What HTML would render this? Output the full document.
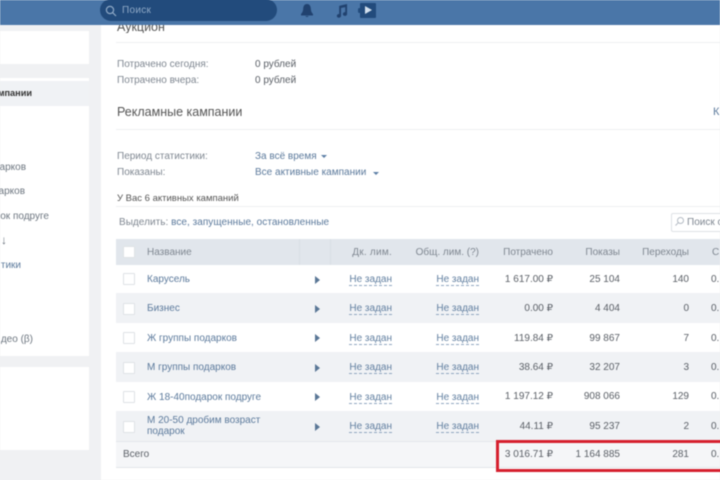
<!DOCTYPE html>
<html lang="ru"><head><meta charset="utf-8"><title>Рекламные кампании</title>
<style>
html,body{margin:0;padding:0;width:720px;height:480px;overflow:hidden;background:#f0f1f3}
body{font-family:"Liberation Sans","DejaVu Sans",sans-serif;font-size:10px;color:#5a5f66;position:relative}
#w{position:absolute;inset:0;filter:blur(.5px)}
.a{position:absolute;white-space:nowrap;line-height:12px}
.b{position:absolute}
.l{color:#5c7a9c}.g{color:#7f8791}.r{text-align:right}
.d{color:#617f a0;color:#617fa0;border-bottom:1px dashed #8fa6c0;line-height:11px}
.c{position:absolute;left:123px;width:10px;height:10px;border:1px solid #dfe2e6;background:#fff;border-radius:1px}
.t{position:absolute;left:315px;width:0;height:0;border-left:5px solid #5a7796;border-top:4px solid transparent;border-bottom:4px solid transparent}
</style></head><body><div id="w">
<div class="b" style="left:0;top:0;width:720px;height:25px;background:#4a76a8"></div>
<div class="b" style="left:100px;top:-1px;width:177px;height:22px;background:#224b7c;border-radius:11px"></div>
<svg class="b" style="left:104px;top:4px" width="14" height="14" viewBox="0 0 14 14" fill="none" stroke="#8fa9c6" stroke-width="1.2"><circle cx="6" cy="6" r="3.6"/><path d="M8.7 8.7L12 12"/></svg>
<div class="a" style="left:122px;top:5px;color:#8fa9c6;font-size:10px;letter-spacing:.3px">Поиск</div>
<svg class="b" style="left:300px;top:3px" width="14" height="15" viewBox="0 0 14 15" fill="#21426f"><path d="M7 1C4.4 1 3.4 3 3.2 5.5 3 8.4 2.4 9.5 1 11V12.5H13V11C11.6 9.5 11 8.4 10.8 5.5 10.6 3 9.6 1 7 1ZM5.3 13A1.9 1.9 0 0 0 8.7 13Z"/></svg>
<svg class="b" style="left:335px;top:3px" width="13" height="15" viewBox="0 0 14 16" fill="#21426f"><path d="M4.5 3L13 1V11.5A2.3 2 0 1 1 11 9.8V4.3L6.5 5.3V13.5A2.3 2 0 1 1 4.5 11.8Z"/></svg>
<div class="b" style="left:360px;top:3px;width:16px;height:15px;background:#224b7c;border-radius:1px"></div>
<div class="b" style="left:358px;top:8px;width:3px;height:5px;background:#224b7c;border-radius:2px"></div>
<div class="b" style="left:365px;top:6px;width:0;height:0;border-left:7px solid #d3e0ee;border-top:4.5px solid transparent;border-bottom:4.5px solid transparent"></div>

<div class="b" style="left:0;top:31px;width:89px;height:33px;background:#fff"></div>
<div class="b" style="left:0;top:78px;width:89px;height:278px;background:#fff"></div>
<div class="b" style="left:0;top:81px;width:89px;height:25px;background:#f0f2f5"></div>
<div class="b" style="left:0;top:367px;width:89px;height:83px;background:#fff"></div>
<div class="a" style="right:688px;top:87px;color:#333;font-weight:bold;font-size:9.2px">мпании</div>
<div class="a" style="right:694px;top:162px;color:#6d7680">арков</div>
<div class="a" style="right:695px;top:186px;color:#6d7680">арков</div>
<div class="a" style="right:671px;top:211px;color:#6d7680">ок подруге</div>
<div class="a" style="left:1px;top:234px;color:#6d7680;font-size:12px">↓</div>
<div class="a l" style="right:699px;top:260px">тики</div>
<div class="a" style="right:687px;top:334px;color:#6d7680">део (β)</div>

<div class="b" style="left:101px;top:25px;width:619px;height:455px;background:#fff"></div>
<div class="a" style="left:117px;top:21px;font-size:12.5px;color:#555;clip-path:inset(4px 0 0 0)">Аукцион</div>
<div class="b" style="left:116px;top:42px;width:604px;height:1px;background:#eef0f2"></div>
<div class="a g" style="left:117px;top:59px">Потрачено сегодня:</div><div class="a" style="left:255px;top:59px">0 рублей</div>
<div class="a g" style="left:117px;top:75px">Потрачено вчера:</div><div class="a" style="left:255px;top:75px">0 рублей</div>
<div class="a" style="left:117px;top:105px;font-size:12.5px;line-height:15px;color:#555">Рекламные кампании</div>
<div class="a l" style="left:713px;top:106px;font-size:11px">К</div>
<div class="b" style="left:116px;top:129px;width:604px;height:1px;background:#eef0f2"></div>
<div class="a g" style="left:117px;top:151px">Период статистики:</div><div class="a l" style="left:255px;top:151px">За всё время</div>
<div class="b" style="left:321px;top:155px;border-top:3px solid #5d7fa6;border-left:3px solid transparent;border-right:3px solid transparent"></div>
<div class="a g" style="left:117px;top:167px">Показаны:</div><div class="a l" style="left:255px;top:167px">Все активные кампании</div>
<div class="b" style="left:373px;top:172px;border-top:3px solid #5d7fa6;border-left:3px solid transparent;border-right:3px solid transparent"></div>
<div class="a" style="left:117px;top:193px;font-size:9.5px;color:#555">У Вас 6 активных кампаний</div>
<div class="b" style="left:116px;top:206px;width:604px;height:1px;background:#eef0f2"></div>
<div class="a g" style="left:119px;top:217px;letter-spacing:.04px">Выделить: <span class="l">все, запущенные, остановленные</span></div>
<div class="b" style="left:671px;top:213px;width:60px;height:17px;border:1px solid #dfe2e6;border-radius:2px;background:#fff"></div>
<svg class="b" style="left:674px;top:216px" width="11" height="11" viewBox="0 0 11 11" fill="none" stroke="#b4bbc4"><circle cx="6.5" cy="4.5" r="3"/><path d="M4.3 6.7L1.5 9.5"/></svg>
<div class="a g" style="left:687px;top:217px">Поиск о</div>

<div class="b" style="left:116px;top:239px;width:604px;height:26px;background:#e1e6ec"></div>
<div class="b" style="left:116px;top:293px;width:604px;height:30px;background:#f0f2f5"></div>
<div class="b" style="left:116px;top:352px;width:604px;height:30px;background:#f0f2f5"></div>
<div class="b" style="left:116px;top:411px;width:604px;height:30px;background:#f0f2f5"></div>
<div class="b" style="left:116px;top:441px;width:604px;height:27px;background:#f5f6f8;border-top:1px solid #e3e6ea;border-bottom:1px solid #e3e6ea;box-sizing:border-box"></div>
<div class="b" style="left:299px;top:239px;width:1px;height:26px;background:#d9dfe6"></div>
<div class="b" style="left:330px;top:239px;width:1px;height:26px;background:#d9dfe6"></div>

<div class="c" style="top:246px"></div><div class="c" style="top:273px"></div><div class="c" style="top:303px"></div><div class="c" style="top:332px"></div><div class="c" style="top:362px"></div><div class="c" style="top:391px"></div><div class="c" style="top:421px"></div>

<div class="a g" style="left:147px;top:247px">Название</div>
<div class="a g r" style="right:328px;top:247px;letter-spacing:.25px">Дк. лим.</div>
<div class="a g r" style="right:241px;top:247px">Общ. лим. (?)</div>
<div class="a g r" style="right:167px;top:247px">Потрачено</div>
<div class="a g r" style="right:100px;top:247px">Показы</div>
<div class="a g r" style="right:31px;top:247px">Переходы</div>
<div class="a g" style="left:712px;top:247px">С</div>

<div class="a l" style="left:147px;top:274px">Карусель</div>
<div class="a l" style="left:147px;top:303px">Бизнес</div>
<div class="a l" style="left:147px;top:333px">Ж группы подарков</div>
<div class="a l" style="left:147px;top:362px">М группы подарков</div>
<div class="a l" style="left:147px;top:392px">Ж 18-40подарок подруге</div>
<div class="a l" style="left:147px;top:415px;line-height:11px">М 20-50 дробим возраст<br>подарок</div>
<div class="a" style="left:123px;top:449px">Всего</div>

<div class="t" style="top:276px"></div><div class="t" style="top:305px"></div><div class="t" style="top:334px"></div><div class="t" style="top:364px"></div><div class="t" style="top:393px"></div><div class="t" style="top:423px"></div>

<div class="a d" style="right:328px;top:274px">Не задан</div><div class="a d" style="right:241px;top:274px">Не задан</div>
<div class="a d" style="right:328px;top:303px">Не задан</div><div class="a d" style="right:241px;top:303px">Не задан</div>
<div class="a d" style="right:328px;top:333px">Не задан</div><div class="a d" style="right:241px;top:333px">Не задан</div>
<div class="a d" style="right:328px;top:362px">Не задан</div><div class="a d" style="right:241px;top:362px">Не задан</div>
<div class="a d" style="right:328px;top:392px">Не задан</div><div class="a d" style="right:241px;top:392px">Не задан</div>
<div class="a d" style="right:328px;top:421px">Не задан</div><div class="a d" style="right:241px;top:421px">Не задан</div>

<div class="a r" style="right:167px;top:274px">1 617.00 ₽</div><div class="a r" style="right:100px;top:274px">25 104</div><div class="a r" style="right:31px;top:274px">140</div><div class="a" style="left:711px;top:274px">0.</div>
<div class="a r" style="right:167px;top:303px">0.00 ₽</div><div class="a r" style="right:100px;top:303px">4 404</div><div class="a r" style="right:31px;top:303px">0</div><div class="a" style="left:711px;top:303px">0.</div>
<div class="a r" style="right:167px;top:333px">119.84 ₽</div><div class="a r" style="right:100px;top:333px">99 867</div><div class="a r" style="right:31px;top:333px">7</div><div class="a" style="left:711px;top:333px">0.</div>
<div class="a r" style="right:167px;top:362px">38.64 ₽</div><div class="a r" style="right:100px;top:362px">32 207</div><div class="a r" style="right:31px;top:362px">3</div><div class="a" style="left:711px;top:362px">0.</div>
<div class="a r" style="right:167px;top:391px">1 197.12 ₽</div><div class="a r" style="right:100px;top:391px">908 066</div><div class="a r" style="right:31px;top:391px">129</div><div class="a" style="left:711px;top:391px">0.</div>
<div class="a r" style="right:167px;top:421px">44.11 ₽</div><div class="a r" style="right:100px;top:421px">95 237</div><div class="a r" style="right:31px;top:421px">2</div><div class="a" style="left:711px;top:421px">0.</div>
<div class="a r" style="right:167px;top:449px">3 016.71 ₽</div><div class="a r" style="right:100px;top:449px">1 164 885</div><div class="a r" style="right:31px;top:449px">281</div><div class="a" style="left:711px;top:449px">0.</div>

<div class="b" style="left:496px;top:440px;width:230px;height:32px;border:3px solid #d6202e;box-sizing:border-box"></div>
</div></body></html>
